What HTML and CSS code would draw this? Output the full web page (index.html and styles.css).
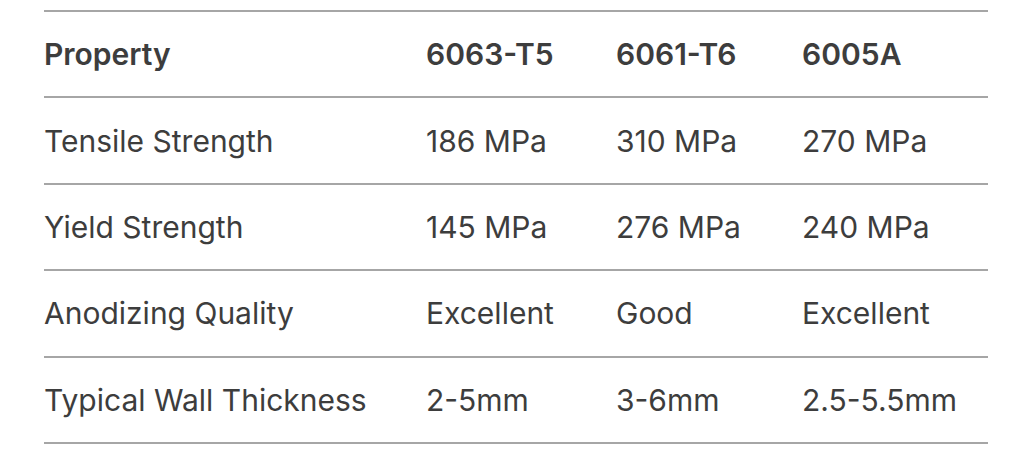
FILE: index.html
```html
<!DOCTYPE html>
<html>
<head>
<meta charset="utf-8">
<link rel="stylesheet" href="styles.css">
</head>
<body>
<table class="spec">
  <thead>
    <tr><th class="c1">Property</th><th class="c2">6063-T5</th><th class="c3">6061-T6</th><th class="c4">6005A</th></tr>
  </thead>
  <tbody>
    <tr><td>Tensile Strength</td><td>186 MPa</td><td>310 MPa</td><td>270 MPa</td></tr>
    <tr><td>Yield Strength</td><td>145 MPa</td><td>276 MPa</td><td>240 MPa</td></tr>
    <tr><td>Anodizing Quality</td><td>Excellent</td><td>Good</td><td>Excellent</td></tr>
    <tr><td>Typical Wall Thickness</td><td>2-5mm</td><td>3-6mm</td><td>2.5-5.5mm</td></tr>
  </tbody>
</table>
</body>
</html>
```

FILE: styles.css
```css
html, body {
  margin: 0;
  padding: 0;
  background: #ffffff;
}
body {
  padding: 10px 22px 0 44px;
  font-family: Inter, "Noto Sans", sans-serif;
  color: #3d3d3d;
}
.spec {
  border-collapse: collapse;
  width: 944px;
  table-layout: fixed;
  font-size: 30px;
}
.spec th, .spec td {
  padding: 1px 0 1px 0;
  height: 82.4px;
  line-height: 36px;
  text-align: left;
  vertical-align: middle;
  border-bottom: 2px solid #a6a6a6;
}
.spec thead tr {
  border-top: 2px solid #a6a6a6;
}
.spec th {
  font-weight: 600;
}
.spec td {
  font-weight: 400;
}
.c1 { width: 382px; }
.c2 { width: 190px; }
.c3 { width: 186px; }
.c4 { width: 186px; }
```
